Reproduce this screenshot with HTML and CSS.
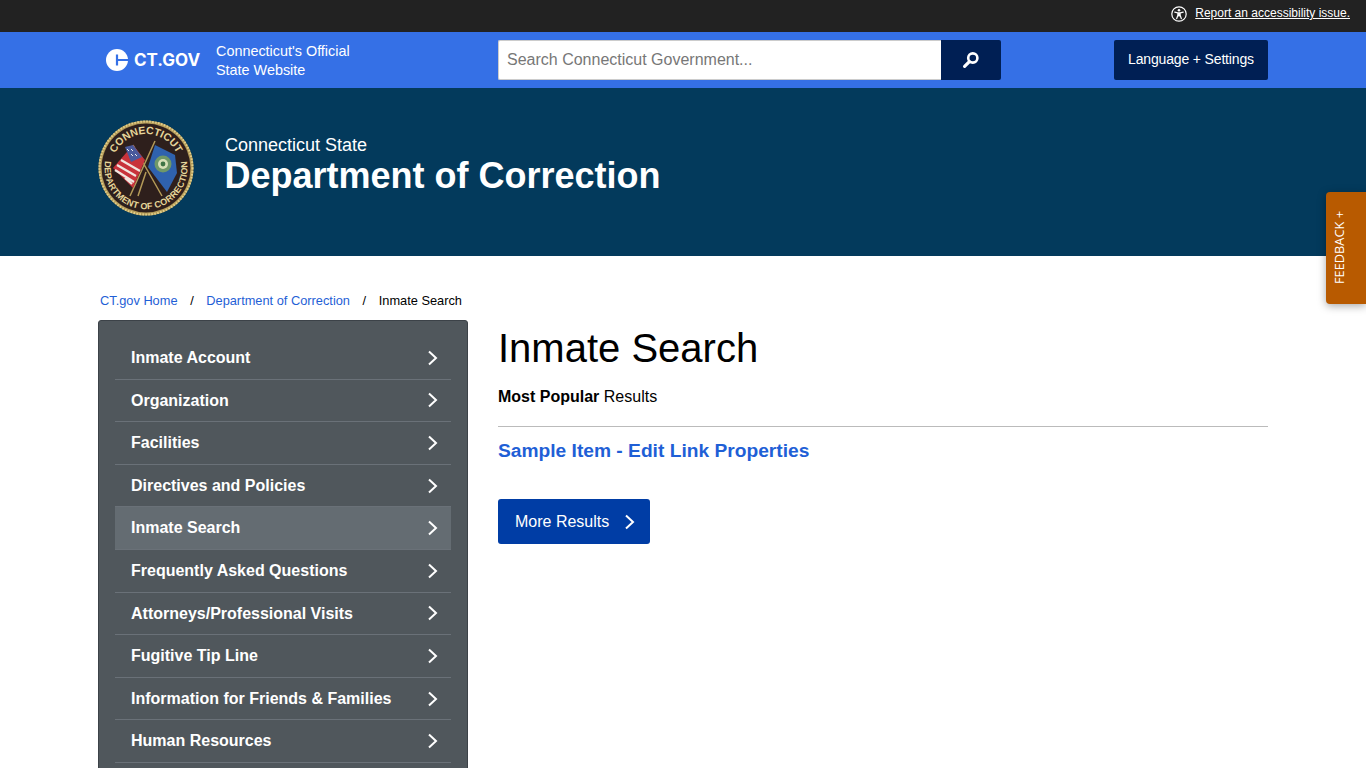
FILE: index.html
```html
<!DOCTYPE html>
<html lang="en">
<head>
<meta charset="utf-8">
<title>Inmate Search</title>
<link rel="stylesheet" href="styles.css">
</head>
<body>
<div class="topbar">
  <svg class="a11y-icon" viewBox="0 0 16 16" width="16" height="16"><circle cx="8" cy="8" r="7.2" fill="none" stroke="#fff" stroke-width="1.2"/><circle cx="8" cy="4.2" r="1.3" fill="#fff"/><path d="M3.8 6.2 L6.8 6.8 H9.2 L12.2 6.2 M6.9 6.8 V9.2 L5.7 12.6 M9.1 6.8 V9.2 L10.3 12.6 M6.9 9 H9.1 M8 7 V10" fill="none" stroke="#fff" stroke-width="1.3" stroke-linecap="round"/></svg>
  <a class="a11y-link" href="#">Report an accessibility issue.</a>
</div>
<header class="ctbar">
  <div class="ctbar-inner">
    <div class="brand">
      <svg class="brand-mark" viewBox="0 0 24 24" width="24" height="24"><circle cx="12" cy="12" r="11" fill="#fff"/><path d="M12 6.5 V17.5 M12 12 H24" fill="none" stroke="#3570e6" stroke-width="2.2"/></svg>
      <span class="brand-name">CT.GOV</span>
      <span class="brand-tag">Connecticut's Official<br>State Website</span>
    </div>
    <form class="search">
      <input class="search-input" type="text" placeholder="Search Connecticut Government...">
      <button class="search-btn" type="button" aria-label="Search"><svg viewBox="0 0 18 18" width="18" height="18"><circle cx="10.8" cy="7" r="4.6" fill="none" stroke="#fff" stroke-width="2.6"/><path d="M7.4 10.6 L2.6 15.4" stroke="#fff" stroke-width="3.2" stroke-linecap="round"/></svg></button>
    </form>
    <button class="lang-btn" type="button">Language + Settings</button>
  </div>
</header>
<section class="dept">
  <div class="dept-inner">
    <svg class="seal" viewBox="0 0 96 96" width="96" height="96">
      <defs>
        <path id="arcTop" d="M14 48 A34 34 0 0 1 82 48"/>
        <path id="arcBottom" d="M8.5 35 A41.5 41.5 0 1 0 87.5 35"/>
      </defs>
      <circle cx="48" cy="48" r="47.5" fill="#b39a58"/>
      <circle cx="48" cy="48" r="46.5" fill="none" stroke="#e2cf8a" stroke-width="2" stroke-dasharray="1.6 1.4"/>
      <circle cx="48" cy="48" r="44.5" fill="#2e1f1c"/>
      <text class="seal-text"><textPath href="#arcTop" startOffset="50%" text-anchor="middle">CONNECTICUT</textPath></text>
      <text class="seal-text seal-small"><textPath href="#arcBottom" startOffset="50%" text-anchor="middle">DEPARTMENT OF CORRECTION</textPath></text>
      <path d="M35 25 L64 76 M57 21 L32 76 M48 52 L40 76" stroke="#b39a58" stroke-width="1.5" fill="none"/>
      <path d="M35 25 L47 40 L35 68 L15 48 Z" fill="#c8333b"/>
      <path d="M19 45 L38 56 M23 40 L42 51 M17 50 L36 62 M27 58 L34 64" stroke="#f0e6e0" stroke-width="2.2"/>
      <path d="M27 27 L35 25 L44 37 L33 42 Z" fill="#4a5a9c"/>
      <path d="M29 29 L31 31 M33 29 L35 31 M33 34 L35 36 M37 34 L39 36" stroke="#eee" stroke-width="1"/>
      <path d="M57 25 L77 35 L79 53 L69 72 L50 47 Z" fill="#2f62ae"/>
      <circle cx="65" cy="44" r="8.5" fill="#6f9868"/>
      <circle cx="65" cy="44" r="5" fill="#d7e0b8"/>
      <circle cx="65" cy="44" r="2.4" fill="#3f7446"/>
    </svg>
    <div class="dept-title">
      <div class="dept-sub">Connecticut State</div>
      <div class="dept-name">Department of Correction</div>
    </div>
  </div>
</section>
<a class="feedback" href="#"><span>FEEDBACK +</span></a>
<div class="page">
  <nav class="crumbs">
    <a href="#">CT.gov Home</a><span class="sep">/</span><a href="#">Department of Correction</a><span class="sep">/</span><span>Inmate Search</span>
  </nav>
  <div class="columns">
    <aside class="side">
      <ul class="side-list">
        <li><a class="side-item" href="#"><span>Inmate Account</span><svg class="chev" viewBox="0 0 12 16" width="12" height="16"><path d="M2 1.5 L9 8 L2 14.5"/></svg></a></li>
        <li><a class="side-item" href="#"><span>Organization</span><svg class="chev" viewBox="0 0 12 16" width="12" height="16"><path d="M2 1.5 L9 8 L2 14.5"/></svg></a></li>
        <li><a class="side-item" href="#"><span>Facilities</span><svg class="chev" viewBox="0 0 12 16" width="12" height="16"><path d="M2 1.5 L9 8 L2 14.5"/></svg></a></li>
        <li><a class="side-item" href="#"><span>Directives and Policies</span><svg class="chev" viewBox="0 0 12 16" width="12" height="16"><path d="M2 1.5 L9 8 L2 14.5"/></svg></a></li>
        <li><a class="side-item active" href="#"><span>Inmate Search</span><svg class="chev" viewBox="0 0 12 16" width="12" height="16"><path d="M2 1.5 L9 8 L2 14.5"/></svg></a></li>
        <li><a class="side-item" href="#"><span>Frequently Asked Questions</span><svg class="chev" viewBox="0 0 12 16" width="12" height="16"><path d="M2 1.5 L9 8 L2 14.5"/></svg></a></li>
        <li><a class="side-item" href="#"><span>Attorneys/Professional Visits</span><svg class="chev" viewBox="0 0 12 16" width="12" height="16"><path d="M2 1.5 L9 8 L2 14.5"/></svg></a></li>
        <li><a class="side-item" href="#"><span>Fugitive Tip Line</span><svg class="chev" viewBox="0 0 12 16" width="12" height="16"><path d="M2 1.5 L9 8 L2 14.5"/></svg></a></li>
        <li><a class="side-item" href="#"><span>Information for Friends &amp; Families</span><svg class="chev" viewBox="0 0 12 16" width="12" height="16"><path d="M2 1.5 L9 8 L2 14.5"/></svg></a></li>
        <li><a class="side-item" href="#"><span>Human Resources</span><svg class="chev" viewBox="0 0 12 16" width="12" height="16"><path d="M2 1.5 L9 8 L2 14.5"/></svg></a></li>
      </ul>
    </aside>
    <main class="main">
      <h1 class="title">Inmate Search</h1>
      <p class="popular"><strong>Most Popular</strong> Results</p>
      <hr class="rule">
      <a class="sample" href="#">Sample Item - Edit Link Properties</a>
      <div><a class="more" href="#"><span>More Results</span><svg class="chev" viewBox="0 0 12 16" width="12" height="16"><path d="M2 1.5 L9 8 L2 14.5"/></svg></a></div>
    </main>
  </div>
</div>
</body>
</html>
```
FILE: styles.css
```css
* { box-sizing: border-box; }
html, body { margin: 0; height: 100%; overflow: hidden; }
body { font-family: "Liberation Sans", Arial, sans-serif; background: #fff; color: #000; position: relative; }
a { text-decoration: none; }

.topbar { height: 32px; background: #222; display: flex; align-items: center; justify-content: flex-end; padding: 0 16px 6px 0; gap: 8px; }
.a11y-icon { position: relative; top: 1px; }
.a11y-link { color: #fff; font-size: 12px; text-decoration: underline; }

.ctbar { height: 56px; background: #3570e6; }
.ctbar-inner, .dept-inner, .page { width: 1170px; margin-left: 98px; }
.ctbar-inner { display: flex; align-items: center; height: 100%; }
.brand { display: flex; align-items: center; width: 400px; padding-left: 7px; }
.brand-mark { flex: none; }
.brand-name { color: #fff; font-family: "Inter", "Liberation Sans", sans-serif; font-weight: 700; font-size: 17px; margin-left: 5px; width: 82px; }
.brand-tag { color: #fff; font-size: 14.4px; line-height: 19px; padding-top: 2px; }
.search { display: flex; height: 40px; width: 503px; }
.search-input { flex: 1; min-width: 0; height: 40px; border: 1px solid #ccc; border-right: 0; border-radius: 2px 0 0 2px; padding: 0 8px; font: 16px "Liberation Sans", Arial, sans-serif; background: #fff; }
.search-input::placeholder { color: #777; opacity: 1; }
.search-btn { width: 60px; height: 40px; border: 0; background: #001f54; border-radius: 0 2px 2px 0; display: flex; align-items: center; justify-content: center; padding: 0; }
.lang-btn { margin-left: auto; width: 154px; height: 40px; border: 0; border-radius: 2px; background: #001f54; color: #fff; font: 14px "Liberation Sans", Arial, sans-serif; letter-spacing: -0.16px; padding: 0 0 2px; }

.dept { height: 168px; background: #033a5c; }
.dept-inner { display: flex; align-items: center; height: 160px; }
.seal { flex: none; }
.seal-text { font: 700 10.5px "Liberation Sans", Arial, sans-serif; fill: #e6d69a; }
.seal-small { font-size: 9px; letter-spacing: 0.15px; }
.dept-title { margin-left: 31px; margin-top: -6px; color: #fff; }
.dept-sub { font-size: 18px; line-height: 22px; }
.dept-name { font-size: 36px; font-weight: 700; line-height: 40px; margin-left: -0.5px; }

.feedback { position: absolute; top: 192px; right: 0; width: 40px; height: 112px; padding-right: 14px; background: #b85a00; border-radius: 4px 0 0 4px; box-shadow: 0 2px 8px rgba(0,0,0,.35); display: flex; align-items: center; justify-content: center; }
.feedback span { color: #fff; font: 12.8px "Open Sans", sans-serif; writing-mode: vertical-rl; transform: rotate(180deg); }

.crumbs { padding: 38px 0 0 2px; height: 64px; font-size: 12.8px; line-height: 14px; }
.crumbs a { color: #1f5fd6; }
.sep { margin: 0 12.6px; }
.columns { display: flex; gap: 30px; align-items: flex-start; }
.side { width: 370px; flex: none; background: #50575c; border: 1px solid #3c4248; border-radius: 3px; padding: 16px; }
.side-list { list-style: none; margin: 0; padding: 0; }
.side-item { display: flex; align-items: center; justify-content: space-between; height: 42.6px; padding: 0.4px 12px 0 16px; color: #fff; font-size: 16px; font-weight: 700; border-bottom: 1px solid #6a7178; }
.side-item.active { background: #646c72; }
.side-item .chev { margin-top: -0.4px; }
.chev { flex: none; fill: none; stroke: #fff; stroke-width: 2; }

.main { flex: 1; min-width: 0; }
.title { margin: 4px 0 0; font-size: 40px; font-weight: 400; line-height: 48px; }
.popular { margin: 14px 0 0; font-size: 16px; line-height: 22px; }
.rule { margin: 18px 0 0; border: 0; border-top: 1px solid #bbb; }
.sample { display: block; margin-top: 12px; color: #1f5fd6; font-size: 19.2px; font-weight: 700; line-height: 24px; }
.more { display: inline-flex; align-items: center; gap: 15px; margin-top: 36px; height: 45px; padding: 0 14px 0 17px; background: #003da5; border-radius: 3px; color: #fff; font-size: 16px; }
```
